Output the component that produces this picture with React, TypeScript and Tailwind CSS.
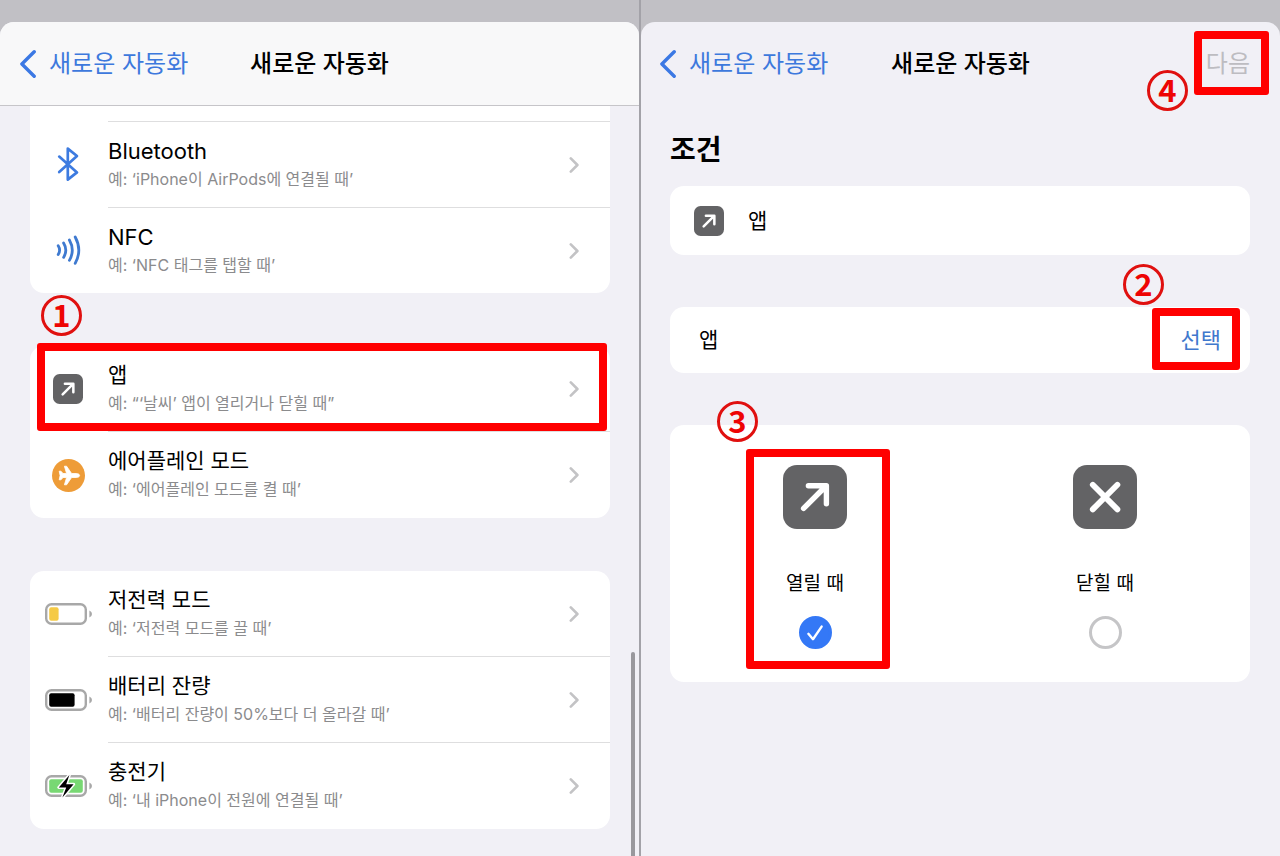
import type { ReactNode } from "react";

const ArrowTile = ({ className }: { className: string }) => (
  <svg viewBox="0 0 64 64" className={className} aria-hidden="true">
    <rect width="64" height="64" rx="14" fill="#636365" />
    <path d="M20.6 43.4 43 21M25.4 20.8h18v18" fill="none" stroke="#fff" strokeWidth="5.4" strokeLinecap="round" strokeLinejoin="round" />
  </svg>
);

const CloseTile = ({ className }: { className: string }) => (
  <svg viewBox="0 0 64 64" className={className} aria-hidden="true">
    <rect width="64" height="64" rx="14" fill="#636365" />
    <path d="M19.8 19.8 44.4 44.4M44.4 19.8 19.8 44.4" fill="none" stroke="#fff" strokeWidth="5.8" strokeLinecap="round" />
  </svg>
);

const BluetoothIcon = () => (
  <svg viewBox="0 0 24 36" className="h-9 w-6" fill="none" stroke="#3d7be0" strokeWidth="2.7" strokeLinecap="round" strokeLinejoin="round" aria-hidden="true">
    <path d="M3.2 10.6 21 26.4 11.8 33.6V2.6L21 10 3.2 26" />
  </svg>
);

const NfcIcon = () => (
  <svg viewBox="0 0 26 34" className="h-[34px] w-[26px]" fill="none" stroke="#3f7ad0" strokeWidth="2.8" strokeLinecap="round" aria-hidden="true">
    <path d="M3.2 12.8q2.8 4.4 0 8.8M8.6 10q4.4 7.2 0 14.4M14.4 7q5.8 10.2 0 20.4M20.2 4q7.2 13.2 0 26.4" />
  </svg>
);

const AirplaneIcon = () => (
  <svg viewBox="0 0 33 33" className="size-[33px]" aria-hidden="true">
    <circle cx="16.5" cy="16.5" r="16.5" fill="#ee9c38" />
    <path d="M27.6 16.5c0-1.3-1.6-2-3.4-2h-4.6L14.6 7.2h-2.2l2.2 7.3H11l-2-2.3H7.2l.9 4.3-.9 4.3H9l2-2.3h3.6l-2.2 7.3h2.2l5-7.3h4.6c1.8 0 3.4-.7 3.4-2z" fill="#fff" stroke="#fff" strokeWidth=".8" strokeLinejoin="round" />
  </svg>
);

const Battery = ({ level, color, charging }: { level: number; color: string; charging?: boolean }) => (
  <svg viewBox="0 0 48 24" className="h-6 w-12" aria-hidden="true">
    <rect x="2.2" y="2.2" width="39.6" height="19.6" rx="5.4" fill="none" stroke="#a8a8a8" strokeWidth="2.4" />
    <path d="M45.4 8.4q2.6 1.4 2.6 3.6t-2.6 3.6z" fill="#a8a8a8" />
    <rect x="5.2" y="5.3" width={level} height="13.4" rx="2" fill={color} />
    {charging && (
      <path d="M25.4 1 14.8 13.4h7.4L18.4 23.6 29.6 10.2h-7.4z" fill="#000" stroke="#fff" strokeWidth="3" strokeLinejoin="round" paintOrder="stroke" />
    )}
  </svg>
);

const groups: { title: string; example: string; icon: ReactNode; step?: string }[][] = [
  [
    { title: "Bluetooth", example: "예: ‘iPhone이 AirPods에 연결될 때’", icon: <BluetoothIcon /> },
    { title: "NFC", example: "예: ‘NFC 태그를 탭할 때’", icon: <NfcIcon /> },
  ],
  [
    { title: "앱", example: "예: “‘날씨’ 앱이 열리거나 닫힐 때”", icon: <ArrowTile className="size-[30px]" />, step: "1" },
    { title: "에어플레인 모드", example: "예: ‘에어플레인 모드를 켤 때’", icon: <AirplaneIcon /> },
  ],
  [
    { title: "저전력 모드", example: "예: ‘저전력 모드를 끌 때’", icon: <Battery level={9.4} color="#f5ca46" /> },
    { title: "배터리 잔량", example: "예: ‘배터리 잔량이 50%보다 더 올라갈 때’", icon: <Battery level={25.4} color="#000" /> },
    { title: "충전기", example: "예: ‘내 iPhone이 전원에 연결될 때’", icon: <Battery level={33.6} color="#78d873" charging /> },
  ],
];

const choices = [
  { value: "open", label: "열릴 때", icon: <ArrowTile className="size-16" />, step: "3" },
  { value: "close", label: "닫힐 때", icon: <CloseTile className="size-16" /> },
];

// Numbered red callout
const Step = ({ n, className }: { n: string; className: string }) => (
  <span className={`pointer-events-none absolute z-10 flex size-[41px] items-center justify-center rounded-full border-3 border-[#e0100f] pb-1 font-['Noto_Sans_CJK_KR',sans-serif] text-[31px] leading-none font-bold text-[#ee0404] ${className}`}>
    {n}
  </span>
);

const Frame = ({ className }: { className: string }) => (
  <span className={`pointer-events-none absolute z-10 rounded-[3px] border-8 border-[#ff0000] ${className}`} />
);

const BackButton = () => (
  <button type="button" className="flex items-center gap-[13px] justify-self-start text-2xl text-[#3d79dd]">
    <svg viewBox="0 0 16 28" className="h-7 w-4" fill="none" stroke="#3b78e4" strokeWidth="3.4" strokeLinecap="round" strokeLinejoin="round" aria-hidden="true">
      <path d="M14.2 1.8 1.9 14l12.3 12.2" />
    </svg>
    새로운 자동화
  </button>
);

function TriggerList() {
  // The first group is scrolled under the header, so its rows carry the line on top
  const rowLine = (g: number, isLast: boolean) => {
    if (g === 0) return "border-t border-[#dededf]";
    return isLast ? "border-b border-transparent" : "border-b border-[#dededf]";
  };

  return (
    <section className="flex flex-col border-r border-[#a3a2a8] pt-[22px]">
      <div className="relative flex-1 rounded-t-[14px] bg-[#f1f0f6] pb-[27px]">
        <header className="grid h-[84px] grid-cols-[1fr_auto_1fr] items-center rounded-t-[14px] border-b border-[#c6c5c9] bg-[#f8f8f9] px-5">
          <BackButton />
          <h1 className="text-2xl font-medium">새로운 자동화</h1>
        </header>

        <div className="flex flex-col gap-[53px] pr-[29px] pl-[30px]">
          {groups.map((rows, g) => (
            <ul key={rows[0].title} className={g === 0 ? "rounded-b-[14px] bg-white pt-[15px]" : "rounded-[14px] bg-white"}>
              {rows.map((row, i) => (
                <li key={row.title} className="relative">
                  <button type="button" className="flex w-full text-left">
                    <span className="flex w-[78px] shrink-0 items-center justify-center self-stretch pr-0.5">{row.icon}</span>
                    <span className={`flex h-[86px] flex-1 items-center justify-between pr-[31px] ${rowLine(g, i === rows.length - 1)}`}>
                      <span className="flex flex-col">
                        <span className={g === 0 ? "text-[22px] leading-7" : "text-[21px] leading-7"}>{row.title}</span>
                        <span className="text-base leading-7 text-[#8b8b8d]">{row.example}</span>
                      </span>
                      <svg viewBox="0 0 10 16" className="h-4 w-2.5" fill="none" stroke="#c3c3c5" strokeWidth="2.6" strokeLinecap="round" strokeLinejoin="round" aria-hidden="true">
                        <path d="M1.8 1.4 8.4 8l-6.6 6.6" />
                      </svg>
                    </span>
                  </button>
                  {row.step && (
                    <>
                      <Frame className="-top-[3px] right-[3px] bottom-px left-[7px]" />
                      <Step n={row.step} className="-top-[51px] left-[11px]" />
                    </>
                  )}
                </li>
              ))}
            </ul>
          ))}
        </div>

        {/* Scroll indicator */}
        <div className="absolute right-1 bottom-0 h-[204px] w-1 rounded-t-full bg-[#99989d]" />
      </div>
    </section>
  );
}

function TriggerSetup() {
  return (
    <section className="flex flex-col border-l border-[#a3a2a8] pt-[22px]">
      <div className="flex-1 rounded-t-[14px] bg-[#f1f0f6]">
        <header className="grid h-[84px] grid-cols-[1fr_auto_1fr] items-center px-[19px]">
          <BackButton />
          <h1 className="text-2xl font-medium">새로운 자동화</h1>
          <div className="relative mr-[11px] justify-self-end">
            <button type="button" disabled className="text-2xl text-[#bdbcc1]">다음</button>
            <Frame className="-top-[17px] -right-[19px] h-16 w-[75px]" />
            <Step n="4" className="top-[22px] right-[62px]" />
          </div>
        </header>

        <div className="pr-[30px] pl-[29px]">
          <h2 className="pt-7 pb-5 text-[28px] leading-8 font-bold">조건</h2>

          <div className="flex h-[69px] items-center gap-6 rounded-[14px] bg-white px-6 text-[21px]">
            <ArrowTile className="size-[30px]" />앱
          </div>

          <div className="relative mt-[52px] flex h-[66px] items-center justify-between rounded-[14px] bg-white pr-[29px] pl-[29px]">
            <span className="text-[21px]">앱</span>
            <button type="button" className="text-[22px] text-[#4078cd]">선택</button>
            <Frame className="top-px right-2.5 h-[62px] w-[88px]" />
            <Step n="2" className="-top-[43px] right-[86px]" />
          </div>

          <div className="mt-[52px] grid grid-cols-2 justify-items-center rounded-[14px] bg-white pt-10 pb-[33px]">
            {choices.map((choice) => (
              <label key={choice.value} className="relative flex flex-col items-center">
                {choice.icon}
                <span className="mt-[41px] text-[19px] leading-7">{choice.label}</span>
                <span className="mt-[18px] grid place-items-center">
                  <input
                    type="radio"
                    name="app-event"
                    value={choice.value}
                    defaultChecked={choice.value === "open"}
                    className="peer col-start-1 row-start-1 size-[33px] appearance-none rounded-full border-3 border-[#c5c5c7] checked:border-[#3478f6] checked:bg-[#3478f6]"
                  />
                  <svg viewBox="0 0 16 16" className="pointer-events-none col-start-1 row-start-1 hidden size-4 peer-checked:block" fill="none" stroke="#fff" strokeWidth="2.4" strokeLinecap="round" strokeLinejoin="round" aria-hidden="true">
                    <path d="M1.4 8.8 6 14.2 14.6 1.6" />
                  </svg>
                </span>
                {choice.step && (
                  <>
                    <Frame className="-top-4 -left-[37px] h-[220px] w-36" />
                    <Step n={choice.step} className="-top-16 -left-[66px]" />
                  </>
                )}
              </label>
            ))}
          </div>
        </div>
      </div>
    </section>
  );
}

export default function App() {
  return (
    <main className="grid min-h-screen grid-cols-2 bg-[#c1c0c5] font-['Inter','Noto_Sans_CJK_KR',sans-serif] text-black">
      <TriggerList />
      <TriggerSetup />
    </main>
  );
}
